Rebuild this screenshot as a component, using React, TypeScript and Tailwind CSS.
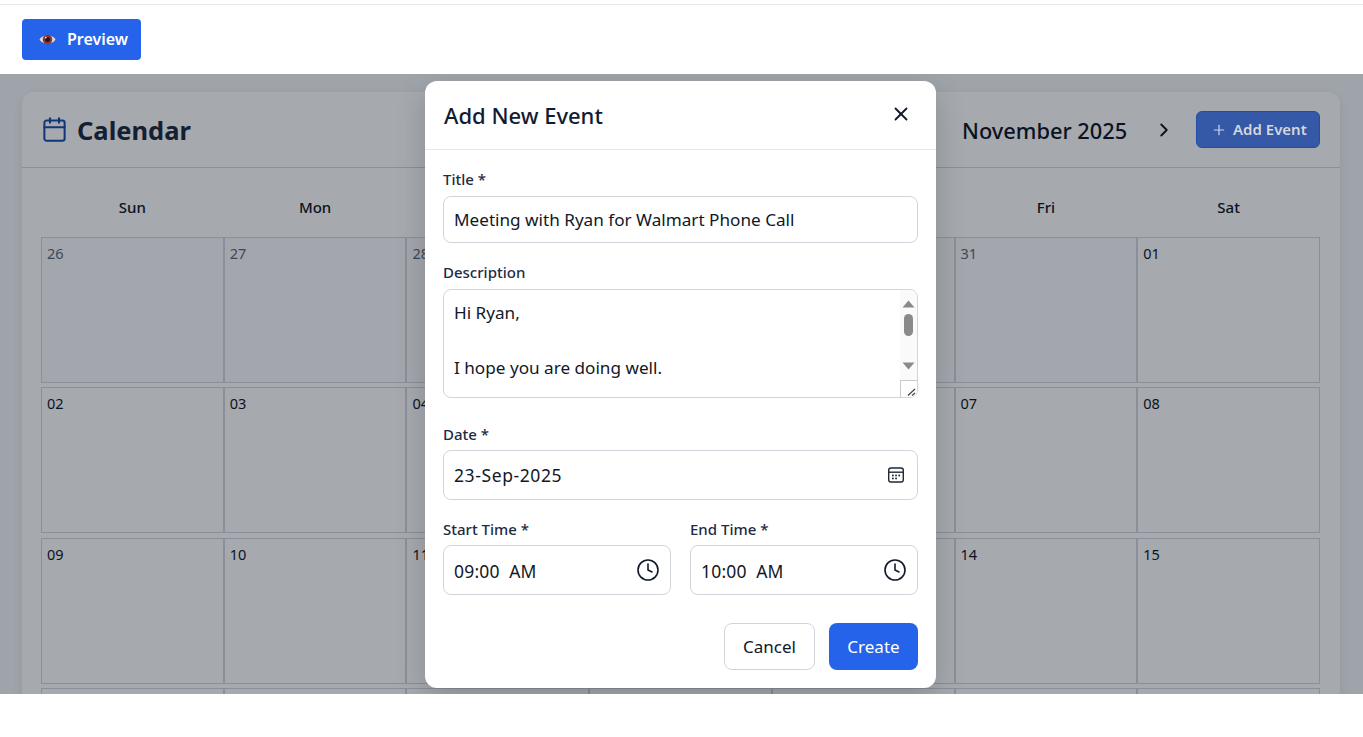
import { Calendar, ChevronLeft, ChevronRight, Clock, Plus, X } from "lucide-react";

const weekdays = ["Sun", "Mon", "Tue", "Wed", "Thu", "Fri", "Sat"];

// empty numbers: those cells sit fully behind the modal, or below the fold
const days = [
  { id: "o26", n: "26", muted: true }, { id: "o27", n: "27", muted: true }, { id: "o28", n: "28", muted: true }, { id: "o29", n: "", muted: true }, { id: "o30", n: "", muted: true }, { id: "o31", n: "31", muted: true }, { id: "n01", n: "01" },
  { id: "n02", n: "02" }, { id: "n03", n: "03" }, { id: "n04", n: "04" }, { id: "n05", n: "" }, { id: "n06", n: "" }, { id: "n07", n: "07" }, { id: "n08", n: "08" },
  { id: "n09", n: "09" }, { id: "n10", n: "10" }, { id: "n11", n: "11" }, { id: "n12", n: "" }, { id: "n13", n: "" }, { id: "n14", n: "14" }, { id: "n15", n: "15" },
  { id: "n16", n: "" }, { id: "n17", n: "" }, { id: "n18", n: "" }, { id: "n19", n: "" }, { id: "n20", n: "" }, { id: "n21", n: "" }, { id: "n22", n: "" },
];

function EyeIcon() {
  return (
    <svg width="17" height="13" viewBox="0 0 17 13" className="shrink-0">
      <path d="M0.5 6.5C3 1 14 1 16.5 6.5C14 12 3 12 0.5 6.5Z" fill="#e6d8d4" />
      <circle cx="8.5" cy="6.5" r="4.8" fill="#8a3a32" />
      <circle cx="8.5" cy="6.5" r="2.5" fill="#2a1412" />
      <circle cx="6.8" cy="4.6" r="0.9" fill="#f3e6e2" />
    </svg>
  );
}

function DateIcon() {
  return (
    <svg width="18" height="18" viewBox="0 0 18 18" fill="none" stroke="#1f2937" strokeWidth="1.4">
      <rect x="1.7" y="2" width="14.6" height="14" rx="2.2" />
      <path d="M1.7 6.2H16.3" />
      <g fill="#1f2937" stroke="none">
        <rect x="5" y="8.6" width="1.7" height="1.7" />
        <rect x="8.2" y="8.6" width="1.7" height="1.7" />
        <rect x="11.4" y="8.6" width="1.7" height="1.7" />
        <rect x="5" y="11.6" width="1.7" height="1.7" />
        <rect x="8.2" y="11.6" width="1.7" height="1.7" />
      </g>
    </svg>
  );
}

function FieldLabel({ children }: { children: string }) {
  return <label className="block text-[15px] font-medium leading-[18px] text-[#1f2a44]">{children}</label>;
}

function TimeField({ label, value }: { label: string; value: string }) {
  return (
    <div className="flex-1">
      <FieldLabel>{label}</FieldLabel>
      <div className="mt-[7px] flex h-[50px] items-center justify-between rounded-lg border border-[#d1d5db] pl-[10px] pr-[10px]">
        <span className="pt-[3px] text-[17.5px] tracking-[0.2px] whitespace-pre text-[#111827]">{value}</span>
        <Clock size={24} strokeWidth={1.6} className="text-[#111827]" />
      </div>
    </div>
  );
}

export default function App() {
  return (
    <div className="flex h-[737px] flex-col overflow-hidden bg-white font-['Noto_Sans','Open_Sans',sans-serif]">
      <div className="h-[5px] shrink-0 border-b border-[#e5e7eb]" />
      <div className="flex h-[69px] shrink-0 items-start px-[22px] pt-[14px]">
        <button className="flex h-[41px] w-[119px] items-center gap-[11px] rounded bg-[#2563eb] pl-[17px] text-[16px] font-semibold text-white">
          <EyeIcon />
          <span className="pb-[2px]">Preview</span>
        </button>
      </div>

      <main className="relative h-[620px] shrink-0 overflow-hidden bg-[#f5f8fa] pl-[22px] pr-[23px] pt-[18px]">
        <section className="rounded-xl bg-white shadow-[0_4px_14px_rgba(0,0,0,0.08)]">
          <header className="flex h-[76px] items-center justify-between border-b border-[#d4d7df] pl-[19px] pr-[20px]">
            <div className="flex items-center gap-[9px]">
              <Calendar size={27} strokeWidth={1.8} className="text-[#1d4fb0]" />
              <h1 className="pt-[1px] text-[25.5px] font-bold text-[#1f2d3f]">Calendar</h1>
            </div>
            <div className="flex items-center">
              <ChevronLeft size={22} className="mr-[23px] text-[#111827]" />
              <span className="w-[165px] pt-[4px] text-[21.8px] font-medium whitespace-nowrap text-[#111827]">November 2025</span>
              <ChevronRight size={22} className="ml-[26px] text-[#111827]" />
              <button className="relative z-20 ml-[21px] flex h-[37px] w-[124px] items-center gap-[6px] rounded-md border border-[#1d4ea8] bg-[#3558a7] pl-[14px] text-[15px] font-semibold text-[#d4d7de]">
                <Plus size={16} strokeWidth={1.8} />
                Add Event
              </button>
            </div>
          </header>

          <div className="pl-[19px] pr-[20px] pt-[29px]">
            <div className="grid grid-cols-7">
              {weekdays.map((d) => (
                <div key={d} className="h-[40px] text-center text-[15px] leading-5 font-medium text-[#111827]">
                  {d}
                </div>
              ))}
            </div>
            <div className="grid grid-cols-7 gap-y-[4.33px]">
              {days.map((d) => (
                <div key={d.id} className={`h-[146px] border border-[#d4d7df] px-[5px] py-[5px] ${d.muted ? "bg-[#fafbfc]" : ""}`}>
                  <span className={`block text-[14.5px] leading-5 ${d.muted ? "text-[#5f6b7c]" : "text-[#111827]"}`}>{d.n}</span>
                </div>
              ))}
            </div>
          </div>
        </section>

        <div className="absolute inset-0 z-10 bg-[rgba(0,10,22,0.35)]" />

        <div className="absolute inset-0 z-30 flex items-start justify-center pt-[7px] pr-[2px]">
          <div className="h-[607px] w-[511px] rounded-xl bg-white shadow-[0_10px_30px_rgba(0,0,0,0.18)]">
            <div className="flex h-[69px] items-center justify-between border-b border-[#e5e7eb] pl-[19px] pr-[24px]">
              <h2 className="text-[22px] font-medium text-[#111c33]">Add New Event</h2>
              <X size={22} strokeWidth={2} className="mb-[2px] text-[#111827]" />
            </div>

            <form className="px-[18px] pt-[20px]">
              <FieldLabel>Title *</FieldLabel>
              <input
                readOnly
                value="Meeting with Ryan for Walmart Phone Call"
                className="mt-[8px] block h-[47px] w-full rounded-lg border border-[#d1d5db] px-[10px] text-[17.15px] text-[#111827] outline-none"
              />

              <div className="mt-[20px]">
                <FieldLabel>Description</FieldLabel>
              </div>
              <div className="relative mt-[8px] h-[109px] overflow-hidden rounded-lg border border-[#d1d5db]">
                <textarea
                  readOnly
                  value={"Hi Ryan,\n\nI hope you are doing well."}
                  className="block h-full w-full resize-none overflow-hidden px-[10px] pt-[9px] text-[17.15px] leading-[27.5px] text-[#111827] outline-none"
                />
                <div className="absolute top-0 right-0 bottom-0 flex w-[17px] flex-col items-center bg-[#fafafa]">
                  <svg width="13" height="8" viewBox="0 0 13 8" className="mt-[10px] shrink-0">
                    <path d="M6.5 0.5L12.5 7.5H0.5Z" fill="#8a8a8a" />
                  </svg>
                  <div className="mt-[6px] h-[22px] w-[9px] rounded-full bg-[#8a8a8a]" />
                  <svg width="13" height="8" viewBox="0 0 13 8" className="mt-[26px] shrink-0">
                    <path d="M6.5 7.5L12.5 0.5H0.5Z" fill="#8a8a8a" />
                  </svg>
                </div>
                <div className="absolute right-0 bottom-0 h-[17px] w-[17px] border-t border-l border-[#c8cacf] bg-white">
                  <svg width="16" height="16" viewBox="0 0 16 16" stroke="#444" strokeWidth="1.2">
                    <path d="M7 14.5L14 8" />
                    <path d="M11 14.5L14 12" />
                  </svg>
                </div>
              </div>

              <div className="mt-[27px]">
                <FieldLabel>Date *</FieldLabel>
              </div>
              <div className="mt-[7px] flex h-[50px] items-center justify-between rounded-lg border border-[#d1d5db] pl-[10px] pr-[12px]">
                <span className="pt-[1px] text-[17.5px] tracking-[0.6px] text-[#111827]">23-Sep-2025</span>
                <DateIcon />
              </div>

              <div className="mt-[20px] flex gap-[19px]">
                <TimeField label="Start Time *" value="09:00  AM" />
                <TimeField label="End Time *" value="10:00  AM" />
              </div>

              <div className="mt-[28px] flex justify-end gap-[14px]">
                <button type="button" className="h-[47px] w-[91px] rounded-lg border border-[#d1d5db] text-[17px] text-[#111827]">
                  Cancel
                </button>
                <button type="button" className="h-[47px] w-[89px] rounded-lg bg-[#2563eb] text-[17px] text-white">
                  Create
                </button>
              </div>
            </form>
          </div>
        </div>
      </main>
    </div>
  );
}
